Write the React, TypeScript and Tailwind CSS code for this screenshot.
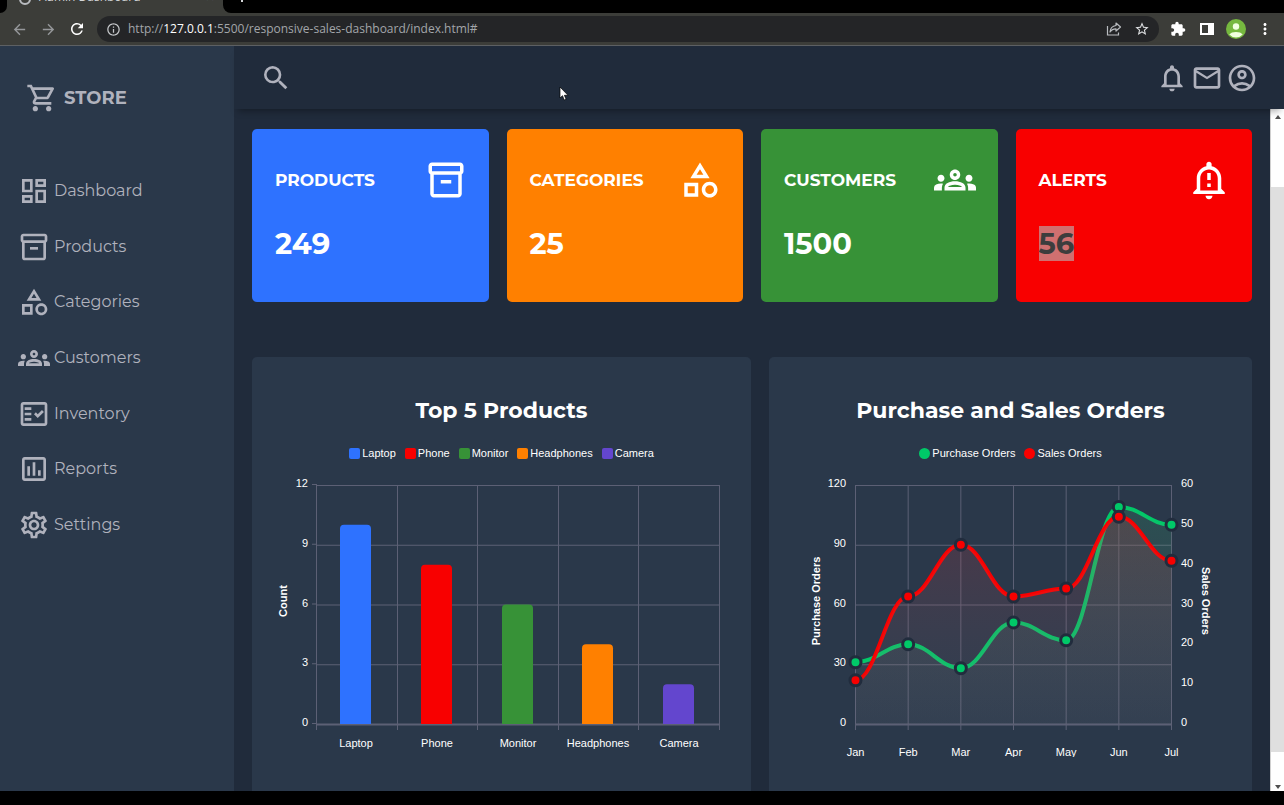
import type { ComponentType, ReactNode } from 'react';
import {
  MdArrowBack,
  MdArrowForward,
  MdExtension,
  MdMoreVert,
  MdOutlineAccountCircle,
  MdOutlineCategory,
  MdOutlineDashboard,
  MdOutlineEmail,
  MdOutlineFactCheck,
  MdOutlineGroups,
  MdOutlineInfo,
  MdOutlineInventory2,
  MdOutlineNotificationImportant,
  MdOutlineNotifications,
  MdOutlinePoll,
  MdOutlineSettings,
  MdOutlineShoppingCart,
  MdRefresh,
  MdSearch,
  MdStarOutline,
} from 'react-icons/md';

type Icon = ComponentType<{ className?: string }>;

const NAV: { label: string; icon: Icon }[] = [
  { label: 'Dashboard', icon: MdOutlineDashboard },
  { label: 'Products', icon: MdOutlineInventory2 },
  { label: 'Categories', icon: MdOutlineCategory },
  { label: 'Customers', icon: MdOutlineGroups },
  { label: 'Inventory', icon: MdOutlineFactCheck },
  { label: 'Reports', icon: MdOutlinePoll },
  { label: 'Settings', icon: MdOutlineSettings },
];

const CARDS: { label: string; value: string; icon: Icon; color: string; selected?: boolean }[] = [
  { label: 'PRODUCTS', value: '249', icon: MdOutlineInventory2, color: 'bg-[#2e72ff]' },
  { label: 'CATEGORIES', value: '25', icon: MdOutlineCategory, color: 'bg-[#ff8000]' },
  { label: 'CUSTOMERS', value: '1500', icon: MdOutlineGroups, color: 'bg-[#379237]' },
  { label: 'ALERTS', value: '56', icon: MdOutlineNotificationImportant, color: 'bg-[#f80000]', selected: true },
];

const PRODUCTS = [
  { name: 'Laptop', count: 10, fill: '#2e72ff', swatch: 'bg-[#2e72ff]' },
  { name: 'Phone', count: 8, fill: '#f80000', swatch: 'bg-[#f80000]' },
  { name: 'Monitor', count: 6, fill: '#379237', swatch: 'bg-[#379237]' },
  { name: 'Headphones', count: 4, fill: '#ff8000', swatch: 'bg-[#ff8000]' },
  { name: 'Camera', count: 2, fill: '#6346ce', swatch: 'bg-[#6346ce]' },
];

const MONTHS = ['Jan', 'Feb', 'Mar', 'Apr', 'May', 'Jun', 'Jul'];
const PURCHASES = [31, 40, 28, 51, 42, 109, 100];
const SALES = [11, 32, 45, 32, 34, 52, 41];

const GRID = '#5c6075';
const TOP = 15;
const BOTTOM = 254;
const scaleY = (value: number, max: number) => BOTTOM - (value / max) * (BOTTOM - TOP);

function BrowserBar() {
  return (
    <div className="shrink-0 bg-black font-['Open_Sans',sans-serif]">
      <div className="flex h-[13px] items-end">
        <div className="h-full w-[7px] bg-[#3c3d39]">
          <div className="h-full rounded-br-lg bg-black" />
        </div>
        <div className="flex h-full w-[216px] items-end justify-between overflow-hidden bg-[#3c3d39] pr-2 pb-2 pl-3 text-xs text-[#d5d7d9]">
          <span className="flex items-end gap-2">
            <span className="size-3 shrink-0 rounded-full border-2 border-[#b9bcc0]" />
            Admin Dashboard
          </span>
          <span>✕</span>
        </div>
        <div className="h-full w-2 bg-[#3c3d39]">
          <div className="h-full rounded-bl-lg bg-black" />
        </div>
        <span className="flex h-full items-start overflow-hidden pl-[10px]">
          <span className="h-[2px] w-[2px] bg-[#d5d7d9]" />
        </span>
      </div>
      <div className="flex h-[33px] items-center border-b border-[#5d6063] bg-[#3c3d39] pr-[9px] pl-[9px]">
        <div className="flex items-center gap-[9px]">
          <button aria-label="Back" className="flex size-5 items-center justify-center text-[#95979a]">
            <MdArrowBack className="size-[17px]" />
          </button>
          <button aria-label="Forward" className="flex size-5 items-center justify-center text-[#95979a]">
            <MdArrowForward className="size-[17px]" />
          </button>
          <button aria-label="Reload" className="flex size-5 items-center justify-center text-white">
            <MdRefresh className="size-[18px]" />
          </button>
        </div>
        <div className="ml-[10px] flex h-[26px] min-w-0 flex-1 items-center rounded-full bg-[#242527] pr-[7px] pl-[9px]">
          <MdOutlineInfo className="size-[15px] shrink-0 text-[#c5c7ca]" />
          <div role="textbox" aria-label="Address" className="ml-[7px] flex-1 truncate text-xs text-[#a3a6aa]">
            http://<span className="text-white">127.0.0.1</span>:5500/responsive-sales-dashboard/index.html#
          </div>
          <button aria-label="Share" className="flex size-5 items-center justify-center text-[#b9bcc0]">
            <svg viewBox="0 0 16 16" className="size-4" fill="none" stroke="currentColor" strokeWidth="1.2">
              <path d="M1.5 5v9h11v-2.500" />
              <path d="M10 2l4.500 4-4.500 4V7.800C7.500 7.800 5.500 8.500 4 11c.3-3.500 2.500-6 6-6.500z" strokeLinejoin="round" />
            </svg>
          </button>
          <button aria-label="Bookmark" className="ml-2 flex size-5 items-center justify-center text-[#dfe1e3]">
            <MdStarOutline className="size-4" />
          </button>
        </div>
        <div className="ml-[9px] flex items-center gap-[9px] text-white">
          <button aria-label="Extensions" className="flex size-5 items-center justify-center">
            <MdExtension className="size-4" />
          </button>
          <button aria-label="Side panel" className="flex size-5 items-center justify-center">
            <svg viewBox="0 0 14 14" className="size-[14px]">
              <path fill="currentColor" d="M0 1h14v12H0zM2 3v8h6V3z" fillRule="evenodd" />
            </svg>
          </button>
          <button aria-label="Profile" className="flex size-5 items-center justify-center">
            <svg viewBox="0 0 20 20" className="size-5">
              <circle cx="10" cy="10" r="10" fill="#76b83f" />
              <circle cx="10" cy="7.500" r="3.200" fill="#f1ffe0" />
              <path d="M3.300 15.500a7.500 4.500 0 0 1 13.400 0A9 9 0 0 1 3.300 15.500z" fill="#f1ffe0" />
            </svg>
          </button>
          <button aria-label="Menu" className="flex size-5 items-center justify-center">
            <MdMoreVert className="size-[18px]" />
          </button>
        </div>
      </div>
    </div>
  );
}

function Sidebar() {
  return (
    <aside className="w-[234px] shrink-0 overflow-hidden bg-[#2a384a] text-[#b0b2bd]">
      <div className="flex items-center gap-[6px] px-[26px] pt-9 text-lg font-bold">
        <MdOutlineShoppingCart className="size-8" />
        <span>STORE</span>
      </div>
      <nav className="pt-[49px]">
        <ul className="flex h-[390px] flex-col">
          {NAV.map(({ label, icon: NavIcon }) => (
            <li key={label} className="flex flex-1">
              <a href="#" className="flex flex-1 items-center gap-1 pl-[18px] text-base font-normal">
                <NavIcon className="size-8" />
                {label}
              </a>
            </li>
          ))}
        </ul>
      </nav>
    </aside>
  );
}

function Header() {
  return (
    <header className="z-10 flex h-[63px] shrink-0 items-center justify-between bg-[#202b3b] px-[26px] text-[#b0b2bd] shadow-[0_6px_7px_-4px_rgba(0,0,0,0.35)]">
      <button aria-label="Search">
        <MdSearch className="size-8" />
      </button>
      <div className="flex items-center gap-[3px]">
        <button aria-label="Notifications">
          <MdOutlineNotifications className="size-8" />
        </button>
        <button aria-label="Messages">
          <MdOutlineEmail className="size-8" />
        </button>
        <button aria-label="Account">
          <MdOutlineAccountCircle className="size-8" />
        </button>
      </div>
    </header>
  );
}

function ChartCard({ title, legend, children }: { title: string; legend: ReactNode; children: ReactNode }) {
  return (
    <section className="rounded-[5px] bg-[#2a384a] pt-10 pb-12">
      <h2 className="text-center text-[22px] leading-7 font-bold text-white">{title}</h2>
      <ul className="flex h-[45px] items-center justify-center gap-[9px] pt-3 font-['Liberation_Sans',Arial,sans-serif] text-[11px] text-white">
        {legend}
      </ul>
      {children}
    </section>
  );
}

function BarChart() {
  const left = 65;
  const column = 80.6;
  return (
    <svg viewBox="0 0 499 287" className="block w-full font-['Liberation_Sans',Arial,sans-serif] text-[11px]" fill="#fff" role="img" aria-label="Top 5 products by count">
      {[0, 3, 6, 9, 12].map((tick) => (
        <g key={tick}>
          <path d={`M${left - 5} ${scaleY(tick, 12) - 0.5}H${left}M${left} ${scaleY(tick, 12) + 0.5}H468`} stroke={GRID} />
          <text x="56" y={scaleY(tick, 12) + 2} textAnchor="end">
            {tick}
          </text>
        </g>
      ))}
      {[0, 1, 2, 3, 4, 5].map((i) => (
        <path key={i} d={`M${Math.round(left + i * column) - 0.5} ${TOP}V${BOTTOM + 6}`} stroke={GRID} />
      ))}
      <path d={`M${left} ${BOTTOM + 0.5}H468`} stroke={GRID} strokeWidth="2" />
      {PRODUCTS.map(({ name, count, fill }, i) => {
        const x = Math.round(left + (i + 0.5) * column) - 17;
        const y = scaleY(count, 12);
        return (
          <g key={name}>
            <path d={`M${x} ${BOTTOM}V${y + 4}q0-4 4-4h23q4 0 4 4V${BOTTOM}z`} fill={fill} />
            <text x={x + 16} y="277" textAnchor="middle">
              {name}
            </text>
          </g>
        );
      })}
      <text transform="translate(35 131) rotate(-90)" textAnchor="middle" fontWeight="bold">
        Count
      </text>
    </svg>
  );
}

function smoothLine(points: [number, number][]) {
  return points
    .map(([x, y], i) => {
      if (i === 0) return `M${x} ${y}`;
      const [px, py] = points[i - 1];
      const reach = (x - px) * 0.4;
      return `C${px + reach} ${py} ${x - reach} ${y} ${x} ${y}`;
    })
    .join('');
}

function AreaChart() {
  const left = 86.5;
  const right = 402.5;
  const step = (right - left) / 6;
  const series = [
    { id: 'purchases', color: '#00c968', tint: '#2fb070', data: PURCHASES, max: 120 },
    { id: 'sales', color: '#f80000', tint: '#d8323c', data: SALES, max: 60 },
  ].map((s) => ({ ...s, points: s.data.map((v, i): [number, number] => [left + i * step, scaleY(v, s.max)]) }));
  return (
    <svg viewBox="0 0 483 287" className="block w-full font-['Liberation_Sans',Arial,sans-serif] text-[11px]" fill="#fff" role="img" aria-label="Purchase and sales orders by month">
      <defs>
        {series.map(({ id, tint }) => (
          <linearGradient key={id} id={id} x1="0" y1="0" x2="0" y2="1">
            <stop offset="0" stopColor={tint} stopOpacity="0.2" />
            <stop offset="1" stopColor="#8a8a94" stopOpacity="0.05" />
          </linearGradient>
        ))}
      </defs>
      {[0, 30, 60, 90, 120].map((tick) => (
        <g key={tick}>
          <path d={`M${left} ${scaleY(tick, 120) + 0.5}H${right}`} stroke={GRID} />
          <text x="77" y={scaleY(tick, 120) + 2} textAnchor="end">
            {tick}
          </text>
        </g>
      ))}
      {[0, 10, 20, 30, 40, 50, 60].map((tick) => (
        <text key={tick} x="412" y={scaleY(tick, 60) + 2}>
          {tick}
        </text>
      ))}
      {MONTHS.map((month, i) => (
        <g key={month}>
          <path d={`M${left + i * step} ${TOP}V${BOTTOM + 6}`} stroke={GRID} />
          <text x={left + i * step} y="286" textAnchor="middle">
            {month}
          </text>
        </g>
      ))}
      <path d={`M${left} ${BOTTOM + 0.5}H${right}`} stroke={GRID} strokeWidth="2" />
      {series.map(({ id, color, points }) => (
        <g key={id}>
          <path d={smoothLine(points)} fill="none" stroke={color} strokeWidth="4" />
          <path d={`${smoothLine(points)}V${BOTTOM}H${left}z`} fill={`url(#${id})`} />
        </g>
      ))}
      {series.map(({ id, color, points }) =>
        points.map(([x, y]) => <circle key={`${id}-${x}`} cx={x} cy={y} r="5.500" fill={color} stroke="#212c3d" strokeWidth="3" />),
      )}
      <text transform="translate(51 131) rotate(-90)" textAnchor="middle" fontWeight="bold">
        Purchase Orders
      </text>
      <text transform="translate(433 131) rotate(90)" textAnchor="middle" fontWeight="bold">
        Sales Orders
      </text>
    </svg>
  );
}

function Main() {
  return (
    <main className="min-w-0 flex-1 overflow-hidden px-[18px] pt-5">
      <div className="grid grid-cols-4 gap-[18px] text-white">
        {CARDS.map(({ label, value, icon: CardIcon, color, selected }) => (
          <section key={label} className={`rounded-[5px] pt-[30px] pr-[22px] pb-[41px] pl-[23px] ${color}`}>
            <div className="flex items-center justify-between">
              <h3 className="pt-[2px] text-[17px] font-bold">{label}</h3>
              <CardIcon className="size-[42px]" />
            </div>
            <p className="pt-[25px] text-[29px] leading-[35px] font-bold">
              <span className={selected ? 'inline-block bg-[#d07070] text-[#3d3d3d]' : 'inline-block'}>{value}</span>
            </p>
          </section>
        ))}
      </div>
      <div className="mt-[55px] grid grid-cols-[499fr_483fr] gap-[18px]">
        <ChartCard
          title="Top 5 Products"
          legend={PRODUCTS.map(({ name, swatch }) => (
            <li key={name} className="flex items-center gap-[2px]">
              <span className={`size-[11px] rounded-[2px] ${swatch}`} />
              {name}
            </li>
          ))}
        >
          <BarChart />
        </ChartCard>
        <ChartCard
          title="Purchase and Sales Orders"
          legend={
            <>
              <li className="flex items-center gap-[2px]">
                <span className="size-[11px] rounded-full bg-[#00c968]" />
                Purchase Orders
              </li>
              <li className="flex items-center gap-[2px]">
                <span className="size-[11px] rounded-full bg-[#f80000]" />
                Sales Orders
              </li>
            </>
          }
        >
          <AreaChart />
        </ChartCard>
      </div>
    </main>
  );
}

function ScrollBar() {
  return (
    <div className="flex w-[14px] shrink-0 flex-col items-center border-l border-[#d0d0d0] bg-white" aria-hidden="true">
      <svg viewBox="0 0 6 4" className="mt-[6px] h-1 w-[6px]">
        <path d="M0 4l3-4 3 4z" fill="#505050" />
      </svg>
      <div className="flex w-full flex-1 flex-col">
        <div className="flex-[68]" />
        <div className="flex-[564] bg-[#dfdfdf]" />
        <div className="flex-[33]" />
      </div>
      <svg viewBox="0 0 6 4" className="mb-[2px] h-1 w-[6px]">
        <path d="M0 0l3 4 3-4z" fill="#505050" />
      </svg>
    </div>
  );
}

export default function App() {
  return (
    <div className="relative flex h-screen flex-col overflow-hidden bg-black pb-[14px] font-['Montserrat','Inter',sans-serif]">
      <BrowserBar />
      <div className="flex min-h-0 flex-1 bg-[#202b3b]">
        <Sidebar />
        <div className="flex min-w-0 flex-1 flex-col">
          <Header />
          <div className="flex min-h-0 flex-1">
            <Main />
            <ScrollBar />
          </div>
        </div>
      </div>
      <svg viewBox="0 0 10 15" className="pointer-events-none absolute top-[86px] left-[559px] z-20 h-[15px] w-[10px]" aria-hidden="true">
        <path d="M1 1v11l2.500-2.300L5.200 14l1.900-.8-1.700-3.900H9z" fill="#fff" stroke="#000" strokeWidth=".7" />
      </svg>
    </div>
  );
}
